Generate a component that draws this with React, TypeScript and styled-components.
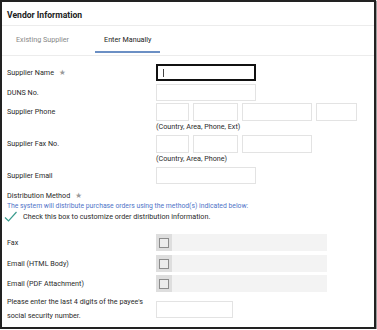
import React from "react";
import styled, { createGlobalStyle } from "styled-components";

const GlobalStyle = createGlobalStyle`
  body {
    margin: 0;
    background: #ffffff;
    font-family: Roboto, "Liberation Sans", sans-serif;
  }
`;

const Frame = styled.div`
  box-sizing: border-box;
  width: 376px;
  height: 329px;
  border: 2px solid #222;
  box-shadow: 1px 1px 1px #9a9a9a;
  background: #fff;
  overflow: hidden;
`;

const Header = styled.div`
  box-sizing: border-box;
  height: 24px;
  padding: 3px 5px 0;
  display: flex;
  align-items: center;
  border-bottom: 1px solid #ececec;
  font-size: 8.6px;
  font-weight: 700;
  color: #222;
`;

const TabBar = styled.div`
  box-sizing: border-box;
  height: 30px;
  padding: 0 5px;
  display: flex;
  align-items: flex-start;
  gap: 17px;
  border-bottom: 1px solid #ececec;
`;

const Tab = styled.div<{ $active?: boolean }>`
  box-sizing: border-box;
  height: 27px;
  padding: 2px 9px 0;
  display: flex;
  align-items: center;
  font-size: 7.2px;
  color: ${(p) => (p.$active ? "#222" : "#888")};
  border-bottom: 2px solid ${(p) => (p.$active ? "#6b8fc4" : "transparent")};
`;

const Form = styled.div`
  padding: 8px 0 0 5px;
  display: flex;
  flex-direction: column;
`;

const Row = styled.div<{ $mt: number; $h?: number }>`
  display: flex;
  align-items: center;
  margin-top: ${(p) => p.$mt}px;
  height: ${(p) => p.$h ?? 17}px;
`;

const Label = styled.div`
  width: 149px;
  flex-shrink: 0;
  font-size: 7.2px;
  line-height: 14px;
  color: #2a2a2a;
`;

const Star = styled.span`
  margin-left: 5px;
  font-family: "DejaVu Sans", sans-serif;
  font-size: 7.5px;
  color: #999;
`;

const Fields = styled.div`
  display: flex;
  gap: 4px;
`;

const Input = styled.div<{ $w: number; $h?: number; $focus?: boolean }>`
  box-sizing: border-box;
  width: ${(p) => p.$w}px;
  height: ${(p) => p.$h ?? 17}px;
  border: ${(p) => (p.$focus ? "2px solid #111" : "1px solid #e3e3e3")};
  display: flex;
  align-items: center;
  padding-left: 5px;
`;

const Caret = styled.span`
  width: 1px;
  height: 8px;
  background: #444;
`;

const Caption = styled.div<{ $mt: number }>`
  margin: ${(p) => p.$mt}px 0 0 149px;
  font-size: 7.2px;
  line-height: 10px;
  color: #2a2a2a;
`;

const Line = styled.div<{ $mt?: number; $blue?: boolean }>`
  margin-top: ${(p) => p.$mt ?? 0}px;
  display: flex;
  align-items: center;
  font-size: ${(p) => (p.$blue ? 6.8 : 7.2)}px;
  line-height: 10px;
  color: ${(p) => (p.$blue ? "#4f74c8" : "#2a2a2a")};
`;

const CheckMark = styled.svg`
  flex-shrink: 0;
  width: 13px;
  height: 11px;
  margin: 0 6px 0 -3px;
`;

const CheckBar = styled.div`
  display: flex;
  width: 171px;
  height: 17px;
  background: #f3f3f3;
`;

const BoxCell = styled.div`
  width: 16px;
  height: 17px;
  background: #dedede;
  display: flex;
  align-items: center;
  justify-content: center;
`;

const Box = styled.div`
  box-sizing: border-box;
  width: 10px;
  height: 10px;
  border: 1px solid #8c8c8c;
  background: #ececec;
`;

function CheckRow({ label, mt }: { label: string; mt: number }) {
  return (
    <Row $mt={mt}>
      <Label>{label}</Label>
      <CheckBar>
        <BoxCell>
          <Box />
        </BoxCell>
      </CheckBar>
    </Row>
  );
}

export default function App() {
  return (
    <>
      <GlobalStyle />
      <Frame>
        <Header>Vendor Information</Header>
        <TabBar>
          <Tab>Existing Supplier</Tab>
          <Tab $active>Enter Manually</Tab>
        </TabBar>
        <Form>
          <Row $mt={0}>
            <Label>
              Supplier Name<Star>★</Star>
            </Label>
            <Input $w={100} $focus>
              <Caret />
            </Input>
          </Row>
          <Row $mt={3}>
            <Label>DUNS No.</Label>
            <Input $w={100} />
          </Row>
          <Row $mt={2} $h={18}>
            <Label>Supplier Phone</Label>
            <Fields>
              <Input $w={33} $h={18} />
              <Input $w={45} $h={18} />
              <Input $w={70} $h={18} />
              <Input $w={41} $h={18} />
            </Fields>
          </Row>
          <Caption $mt={1}>(Country, Area, Phone, Ext)</Caption>
          <Row $mt={3} $h={18}>
            <Label>Supplier Fax No.</Label>
            <Fields>
              <Input $w={33} $h={18} />
              <Input $w={45} $h={18} />
              <Input $w={70} $h={18} />
            </Fields>
          </Row>
          <Caption $mt={1}>(Country, Area, Phone)</Caption>
          <Row $mt={3}>
            <Label>Supplier Email</Label>
            <Input $w={100} />
          </Row>
          <Line $mt={7}>
            Distribution Method<Star>★</Star>
          </Line>
          <Line $blue>
            The system will distribute purchase orders using the method(s) indicated below:
          </Line>
          <Line>
            <CheckMark viewBox="0 0 13 11">
              <path d="M1 6.5 L4.5 10 L12.5 1" fill="none" stroke="#3b9c8e" strokeWidth="1.2" />
            </CheckMark>
            Check this box to customize order distribution information.
          </Line>
          <CheckRow label="Fax" mt={12} />
          <CheckRow label="Email (HTML Body)" mt={4} />
          <CheckRow label="Email (PDF Attachment)" mt={3} />
          <Row $mt={3} $h={28}>
            <Label>
              Please enter the last 4 digits of the payee's
              <br />
              social security number.
            </Label>
            <Input $w={77} />
          </Row>
        </Form>
      </Frame>
    </>
  );
}
